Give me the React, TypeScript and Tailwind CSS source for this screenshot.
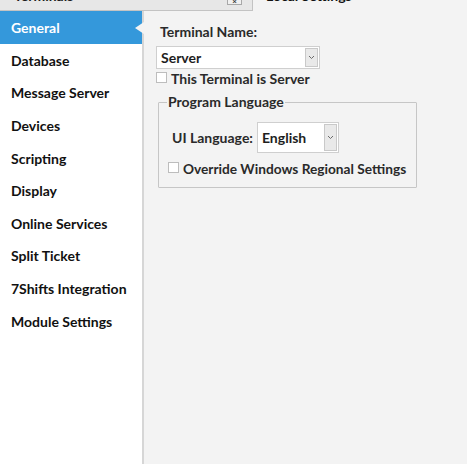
import React from "react";

const items = [
  "General",
  "Database",
  "Message Server",
  "Devices",
  "Scripting",
  "Display",
  "Online Services",
  "Split Ticket",
  "7Shifts Integration",
  "Module Settings",
];

function Chevron() {
  return (
    <svg width="7" height="5" viewBox="0 0 7 5" className="block">
      <path d="M1 1 L3.5 3.5 L6 1" fill="none" stroke="#6b6b6b" strokeWidth="1" />
    </svg>
  );
}

function Select({ value, className }: { value: string; className: string }) {
  return (
    <div className={"flex items-stretch bg-white border border-[#cfcfcf] p-[1px] " + className}>
      <div className="flex-1 flex items-center pl-[3px] text-[14px] text-[#1e1e1e] whitespace-nowrap">{value}</div>
      <div className="w-[13px] bg-[#e9e9e9] border border-[#c9c9c9] flex items-center justify-center">
        <Chevron />
      </div>
    </div>
  );
}

export default function App() {
  return (
    <div
      className="w-[467px] h-[464px] overflow-hidden flex flex-col bg-[#f3f3f3] font-bold text-[#1e1e1e]"
      style={{ fontFamily: "Lato, 'Open Sans', sans-serif" }}
    >
      <div className="h-[11px] flex shrink-0">
        <div className="w-[253px] bg-[#e7e7e7] border-b border-r border-[#c3c3c3] relative overflow-hidden flex">
          <div className="pl-[14px] mt-[-14px] text-[14px] leading-[20px] whitespace-nowrap">Terminals</div>
          <div className="ml-auto mr-[10px] w-[15px] h-[6px] mt-[-1px] border border-[#a8a8a8] bg-[#f0f0f0] overflow-hidden flex items-end justify-center text-[8px] leading-[6px] text-[#333]">
            ×
          </div>
        </div>
        <div className="pl-[13px] mt-[-14px] text-[14px] leading-[20px] text-[#111] whitespace-nowrap">Local Settings</div>
      </div>
      <div className="flex flex-1 min-h-0">
        <div className="w-[144px] bg-white border-r-2 border-[#d6d6d6] shrink-0 flex flex-col">
          {items.map((it, i) => (
            <div
              key={it}
              className={
                "h-[32.6px] flex items-center pl-[11px] pt-[1px] text-[14px] relative whitespace-nowrap " +
                (i === 0 ? "bg-[#3498db] text-white" : "text-[#111]")
              }
            >
              {it}
              {i === 0 && (
                <div className="absolute right-[-2px] top-[11px] w-0 h-0 border-y-[6px] border-y-transparent border-r-[9px] border-r-[#f3f3f3]" />
              )}
            </div>
          ))}
        </div>
        <div className="flex-1 flex flex-col pl-[12px] pt-[12px] text-[14px] whitespace-nowrap">
          <div className="pl-[4px] leading-[18px] text-[#2a2a2a]">Terminal Name:</div>
          <Select value="Server" className="mt-[5px] w-[164px] h-[23px]" />
          <div className="flex items-center mt-[2px] h-[13px]">
            <div className="w-[11px] h-[11px] bg-white border border-[#bdbdbd]" />
            <span className="ml-[4px] mt-[3px] leading-[16px] text-[#2a2a2a]">This Terminal is Server</span>
          </div>
          <div className="relative mt-[18px] ml-[2px] w-[259px] h-[86px] border border-[#c6c6c6] rounded-[1px]">
            <div className="absolute left-[8px] top-[-10px] px-[1px] bg-[#f3f3f3] leading-[18px] text-[#2a2a2a]">
              Program Language
            </div>
            <div className="flex items-center mt-[19px] ml-[13px]">
              <span className="leading-[18px] text-[#2a2a2a]">UI Language:</span>
              <Select value="English" className="ml-[4px] w-[82px] h-[31px]" />
            </div>
            <div className="flex items-center mt-[6px] ml-[9px]">
              <div className="w-[11px] h-[11px] bg-white border border-[#bdbdbd] mt-[-2px]" />
              <span className="ml-[4px] leading-[16px] mt-[2px] text-[13.7px] text-[#2a2a2a]">Override Windows Regional Settings</span>
            </div>
          </div>
        </div>
      </div>
    </div>
  );
}
